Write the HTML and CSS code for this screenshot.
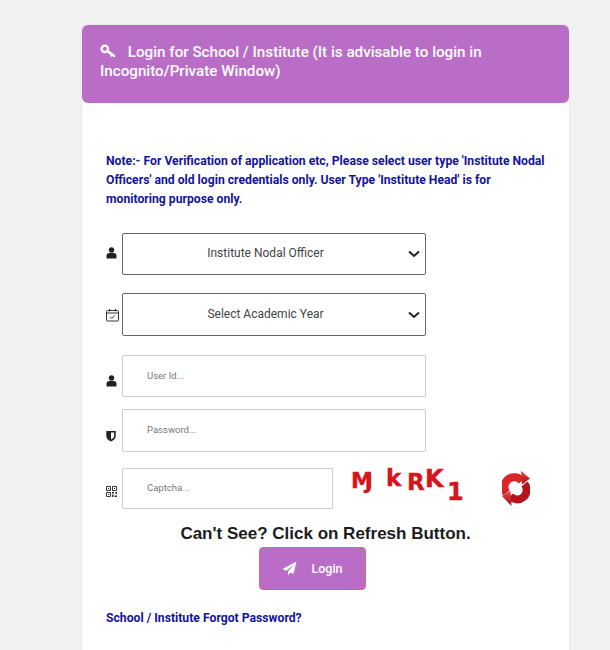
FILE: index.html
```html
<!DOCTYPE html>
<html lang="en">
<head>
    <meta charset="UTF-8">
    <meta name="viewport" content="width=device-width, initial-scale=1.0">
    <title>School / Institute Login</title>
    <link rel="stylesheet" href="styles.css">
</head>
<body>

    <div class="login-box">
        <!-- Header -->
        <div class="login-header">
            <svg class="key-icon" viewBox="0 0 16 14" width="16" height="14">
                <circle cx="4.800" cy="4.800" r="3.200" fill="none" stroke="#fff" stroke-width="2.400"/>
                <path fill="#fff" d="M7.400 7.900l1.600-1.500 6 4.600v2h-1.800l-.9-1-1 .9-1.200-1.200.5-.9-.9-.8-.7.500z"/>
            </svg>
            Login for School / Institute (It is advisable to login in Incognito/Private Window)
        </div>

        <div class="login-body">
            <p class="note">Note:- For Verification of application etc, Please select user type 'Institute Nodal Officers' and old login credentials only. User Type 'Institute Head' is for monitoring purpose only.</p>

            <form>
                <div class="row row-type">
                    <svg class="icon icon-type" viewBox="0 0 11 12" width="11" height="12">
                        <circle cx="5.500" cy="3" r="2.700" fill="#222"/>
                        <path fill="#222" d="M.5 11.500V8.600C.5 7 1.900 6 3.300 6h4.400c1.400 0 2.800 1 2.800 2.600v2.900z"/>
                    </svg>
                    <select class="field-select">
                        <option>Institute Nodal Officer</option>
                    </select>
                </div>

                <div class="row row-year">
                    <svg class="icon" viewBox="0 0 13 14" width="13" height="14">
                        <rect x=".5" y="2.500" width="12" height="10.500" rx="1" fill="none" stroke="#333" stroke-width="1"/>
                        <path fill="none" stroke="#333" stroke-width="1" d="M.5 5h12M3.500 1v2.500M9.500 1v2.500M4 8.800l1.700 1.700 3.200-3.200"/>
                    </svg>
                    <select class="field-select">
                        <option>Select Academic Year</option>
                    </select>
                </div>

                <div class="row row-user">
                    <svg class="icon icon-user" viewBox="0 0 11 12" width="11" height="12">
                        <circle cx="5.500" cy="3" r="2.700" fill="#222"/>
                        <path fill="#222" d="M.5 11.500V8.600C.5 7 1.900 6 3.300 6h4.400c1.400 0 2.800 1 2.800 2.600v2.900z"/>
                    </svg>
                    <input class="field-input" type="text" placeholder="User Id...">
                </div>

                <div class="row row-pass">
                    <svg class="icon icon-pass" viewBox="0 0 10 12" width="10" height="12">
                        <path fill="#222" d="M.3 1h9.400v4.800c0 2.800-2 4.600-4.700 5.700C2.300 10.400.3 8.600.3 5.800z"/>
                        <path fill="#fff" d="M5 2.600h3.100v3.200c0 1.800-1.300 3-3.100 3.800z"/>
                    </svg>
                    <input class="field-input" type="password" placeholder="Password...">
                </div>

                <div class="row row-captcha">
                    <svg class="icon icon-captcha" viewBox="0 0 11 11" width="11" height="11">
                        <path fill="none" stroke="#333" stroke-width="1" d="M.5.5h4v4h-4zM6.500.5h4v4h-4zM.5 6.500h4v4h-4z"/>
                        <path fill="#333" d="M2 2h1v1H2zM8 2h1v1H8zM2 8h1v1H2zM6 6h2v1.500H6zM9.500 6H11v2H9.500zM6 8.500h1.500V11H6zM8.500 9.500H11V11H8.500z"/>
                    </svg>
                    <input class="field-input captcha-input" type="text" placeholder="Captcha...">
                    <svg class="captcha-image" viewBox="0 0 116 41" width="116" height="41">
                        <g class="captcha-text">
                            <text x="1" y="20" font-size="22">M</text>
                            <text x="15" y="21" font-size="20">J</text>
                            <text x="36" y="18" font-size="23">k</text>
                            <text x="57" y="22" font-size="23">R</text>
                            <text x="75" y="19" font-size="24">K</text>
                            <text x="97" y="32" font-size="24">1</text>
                        </g>
                    </svg>
                    <svg class="refresh-icon" viewBox="0 0 28 35" width="28" height="35">
                        <defs>
                            <linearGradient id="refreshRed" x1="0" y1="0" x2="0" y2="1">
                                <stop offset="0" stop-color="#e8474a"/>
                                <stop offset="1" stop-color="#a30d12"/>
                            </linearGradient>
                        </defs>
                        <path fill="none" stroke="#d8262b" stroke-width="8" d="M4.500 22A9.400 9.400 0 0 1 20 10"/>
                        <path fill="none" stroke="#b5141a" stroke-width="8" d="M22.500 13A9.400 9.400 0 0 1 8 25"/>
                        <path fill="url(#refreshRed)" d="M19 0l9 7.500-8 6z"/>
                        <path fill="url(#refreshRed)" d="M0 25l8.500-5 1 15z"/>
                    </svg>
                </div>

                <h3 class="captcha-hint">Can't See? Click on Refresh Button.</h3>

                <div class="login-action">
                    <button class="login-btn" type="button">
                        <svg viewBox="0 0 16 16" width="15" height="15">
                            <path fill="#fff" d="M15.500.5L.5 8.500l4.300 1.800L13 3.500 6.500 11.300v4l2.600-3 3.200 1.400z"/>
                        </svg>
                        Login
                    </button>
                </div>

                <a class="forgot-link" href="#">School / Institute Forgot Password?</a>
            </form>
        </div>
    </div>

</body>
</html>
```

FILE: styles.css
```css
html {
    height: 100%;
    overflow: hidden;
}

body {
    font-family: Roboto, Arial, sans-serif;
    background-color: #f1f1f1;
    margin: 0;
    padding: 25px 41px 0 82px;
}

.login-box {
    width: 487px;
    height: 640px;
    background-color: #fff;
    border-radius: 6px;
    box-shadow: 0 0 2px rgba(0,0,0,0.12);
}

.login-header {
    box-sizing: border-box;
    height: 78px;
    padding: 18px 18px 0;
    background-color: #b96dc7;
    color: #fff;
    font-size: 15.2px;
    font-weight: 500;
    line-height: 19px;
    border-radius: 6px;
}

.key-icon {
    margin-right: 8px;
    vertical-align: -1px;
}

.login-body {
    padding: 49px 24px 0;
}

.note {
    margin: 0 0 24px;
    color: #14149c;
    font-size: 12.2px;
    font-weight: 700;
    line-height: 19px;
}

.row {
    display: flex;
    align-items: center;
}

.row-type {
    margin-bottom: 18px;
}

.row-year {
    margin-bottom: 19px;
}

.row-user {
    margin-bottom: 12px;
}

.row-pass {
    margin-bottom: 16px;
}

.icon {
    flex: none;
    margin-right: 3px;
}

.icon-type {
    margin-right: 5px;
    margin-bottom: 2px;
}

.icon-user {
    margin-right: 5px;
    margin-top: 9px;
}

.icon-pass {
    margin-right: 6px;
    margin-top: 11px;
}

.icon-captcha {
    margin-right: 5px;
    margin-top: 5px;
}

.field-select {
    box-sizing: border-box;
    width: 304px;
    height: 42px;
    padding: 0 17px 2px 0;
    appearance: none;
    background: #fff url("data:image/svg+xml,%3Csvg xmlns='http://www.w3.org/2000/svg' viewBox='0 0 12 8'%3E%3Cpath fill='none' stroke='%23222' stroke-width='2' d='M1 1.500l5 4.500 5-4.500'/%3E%3C/svg%3E") no-repeat right 5px center / 12px 8px;
    border: 1px solid #666;
    border-radius: 2px;
    color: #444;
    font-family: Roboto, Arial, sans-serif;
    font-size: 12px;
    text-align: center;
    text-align-last: center;
}

.row-year .field-select {
    height: 43px;
}

.field-input {
    box-sizing: border-box;
    width: 304px;
    height: 42px;
    padding: 0 24px 2px;
    background-color: #fff;
    border: 1px solid #ccc;
    border-radius: 1px;
    font-family: Roboto, Arial, sans-serif;
    font-size: 9.5px;
    color: #333;
}

.row-pass .field-input {
    height: 43px;
}

.field-input::placeholder {
    color: #777;
    opacity: 1;
}

.captcha-input {
    width: 211px;
    height: 41px;
}

.captcha-image {
    flex: none;
    margin-left: 17px;
    overflow: visible;
}

.captcha-text text {
    fill: #d6141c;
    stroke: #d6141c;
    stroke-width: 0.4;
    font-family: "DejaVu Sans", sans-serif;
    font-weight: 700;
}

.refresh-icon {
    flex: none;
    margin-left: 36px;
}

.captcha-hint {
    margin: 14px 0 3px;
    color: #1c1c1c;
    font-family: "Liberation Sans", Arial, sans-serif;
    font-size: 17px;
    font-weight: 700;
    line-height: 21px;
    text-align: center;
}

.login-action {
    display: flex;
    justify-content: center;
    padding-right: 26px;
}

.login-btn {
    display: flex;
    align-items: center;
    justify-content: center;
    gap: 14px;
    box-sizing: border-box;
    width: 107px;
    height: 43px;
    background-color: #b96dc7;
    border: 1px solid #d0707f;
    border-radius: 4px;
    color: #fff;
    font-family: Roboto, Arial, sans-serif;
    font-size: 12.500px;
    font-weight: 500;
    cursor: pointer;
}

.forgot-link {
    display: block;
    margin-top: 21px;
    color: #14149c;
    font-size: 12.200px;
    font-weight: 700;
    line-height: 15px;
    text-decoration: none;
}
```
